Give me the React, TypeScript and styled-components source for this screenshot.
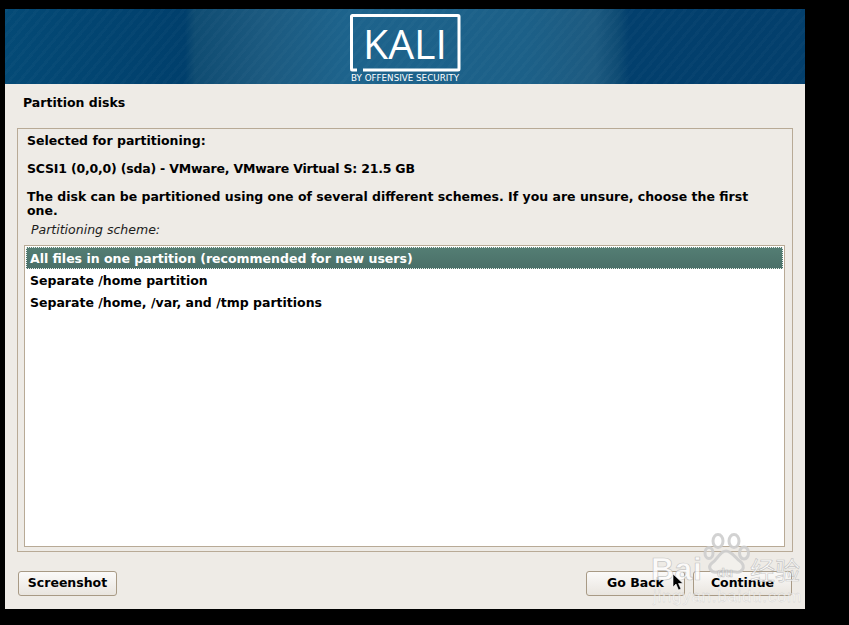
import styled, { createGlobalStyle } from 'styled-components';

const GlobalStyle = createGlobalStyle`
  html, body {
    margin: 0;
    height: 100%;
    background: #000;
  }
  body {
    font-family: "DejaVu Sans", "Liberation Sans", sans-serif;
    font-size: 12.5px;
    color: #000;
  }
`;

const Screen = styled.div`
  position: relative;
  width: 849px;
  height: 625px;
  padding: 9px 0 0 5px;
  box-sizing: border-box;
  background: #000;
  overflow: hidden;
`;

const Installer = styled.div`
  width: 800px;
  height: 600px;
  display: flex;
  flex-direction: column;
  background: #eeebe6;
`;

const Banner = styled.header`
  height: 75px;
  flex: none;
  display: flex;
  justify-content: center;
  background-image: repeating-linear-gradient(
      130deg,
      rgba(255, 255, 255, 0.018) 0 3px,
      rgba(255, 255, 255, 0) 3px 8px
    ),
    linear-gradient(
      90deg,
      #044a76 0,
      #003f6c 180px,
      #0f4c72 190px,
      #1c5a80 260px,
      #1d638c 340px,
      #1c6088 520px,
      #1d5a80 590px,
      #0f4c74 612px,
      #023f6d 624px,
      #033f6c 800px
    );
`;

const Title = styled.h1`
  height: 44px;
  flex: none;
  margin: 0;
  padding: 0 0 8px 18px;
  box-sizing: border-box;
  display: flex;
  align-items: center;
  font-size: 12.5px;
  font-weight: bold;
`;

const Panel = styled.main`
  flex: 1;
  min-height: 0;
  margin: 0 12px;
  padding: 5px 7px 4px 6px;
  display: flex;
  flex-direction: column;
  border: 1px solid #b8aa96;
`;

const Info = styled.p<{ $gap: number; $tracking?: number }>`
  margin: 0 0 ${(props) => props.$gap}px 3px;
  font-weight: bold;
  line-height: 14px;
  letter-spacing: ${(props) => props.$tracking ?? 0}px;
`;

const SchemeLabel = styled.div`
  margin: 5px 0 8px 7px;
  font-style: italic;
  line-height: 14px;
  color: #1c1c1c;
`;

const List = styled.ul`
  flex: 1;
  margin: 0;
  padding: 1px;
  list-style: none;
  background: #fff;
  border: 1px solid #b8aa96;
`;

const Row = styled.li<{ $selected?: boolean }>`
  height: 22px;
  padding-left: 4px;
  box-sizing: border-box;
  display: flex;
  align-items: center;
  font-weight: bold;
  color: ${(props) => (props.$selected ? '#fff' : '#000')};
  background: ${(props) =>
    props.$selected ? 'linear-gradient(#547e74, #4a6f68)' : 'transparent'};
  outline: ${(props) => (props.$selected ? '1px dotted #e8efe9' : 'none')};
  outline-offset: -1px;
`;

const Footer = styled.footer`
  height: 57px;
  flex: none;
  padding: 19px 13px 0 13px;
  box-sizing: border-box;
  display: flex;
  align-items: flex-start;
  gap: 8px;
`;

const Button = styled.button<{ $pushLeft?: boolean }>`
  width: 99px;
  height: 25px;
  margin-left: ${(props) => (props.$pushLeft ? 'auto' : '0')};
  padding: 0 0 2px;
  font: bold 12.5px "DejaVu Sans", sans-serif;
  color: #000;
  background: linear-gradient(#fbfaf9, #e9e5df);
  border: 1px solid #a89a85;
  border-radius: 3px;
`;

const Cursor = styled.svg`
  position: absolute;
  left: 672px;
  top: 574px;
`;

// baidu stamp sits over the whole screenshot, so it covers buttons as well
const Watermark = styled.div`
  position: absolute;
  left: 650px;
  top: 533px;
  width: 160px;
  height: 74px;
  color: rgba(255, 255, 255, 0.78);
  -webkit-text-stroke: 0.7px rgba(165, 165, 165, 0.6);
  pointer-events: none;
`;

const WatermarkBrand = styled.span`
  position: absolute;
  left: 1px;
  top: 20px;
  font: bold 32px/32px "Liberation Sans", sans-serif;
  letter-spacing: 0.5px;
`;

const WatermarkDu = styled.span`
  position: absolute;
  left: 67px;
  top: 33px;
  font: bold 13px/14px "Liberation Sans", sans-serif;
  color: rgba(255, 255, 255, 0.4);
`;

const WatermarkCn = styled.span`
  position: absolute;
  left: 100px;
  top: 23px;
  font: 25px/26px "Noto Sans CJK SC", sans-serif;
`;

const WatermarkUrl = styled.span`
  position: absolute;
  left: 3px;
  top: 55px;
  font: 17px/18px "Liberation Sans", sans-serif;
  letter-spacing: 0.700px;
  white-space: nowrap;
  color: rgba(255, 255, 255, 0.55);
  -webkit-text-stroke: 0.3px rgba(165, 165, 165, 0.5);
`;

const PawPrint = styled.svg`
  position: absolute;
  left: 53px;
  top: 0;
`;

function KaliLogo() {
  return (
    <svg width="120" height="75" viewBox="0 0 120 75">
      <path
        d="M12 61 H7 Q6.5 61 6.5 60 V7.5 Q6.5 6.500 7.500 6.500 H113 Q114 6.500 114 7.500 V60 Q114 61 113 61 H18"
        fill="none"
        stroke="#fff"
        strokeWidth="3"
      />
      <text
        x="60"
        y="50"
        textAnchor="middle"
        fill="#fff"
        fontFamily="'Open Sans', sans-serif"
        fontSize="41"
      >
        KALI
      </text>
      <text
        x="60"
        y="71.500"
        textAnchor="middle"
        fill="#fff"
        fontFamily="'DejaVu Sans', sans-serif"
        fontSize="8"
        textLength="108"
        lengthAdjust="spacingAndGlyphs"
      >
        BY OFFENSIVE SECURITY
      </text>
    </svg>
  );
}

function App() {
  return (
    <>
      <GlobalStyle />
      <Screen>
        <Installer>
          <Banner>
            <KaliLogo />
          </Banner>
          <Title>Partition disks</Title>
          <Panel>
            <Info $gap={14}>Selected for partitioning:</Info>
            <Info $gap={14} $tracking={-0.2}>
              SCSI1 (0,0,0) (sda) - VMware, VMware Virtual S: 21.5 GB
            </Info>
            <Info $gap={0}>
              The disk can be partitioned using one of several different schemes. If you are
              unsure, choose the first
              <br />
              one.
            </Info>
            <SchemeLabel>Partitioning scheme:</SchemeLabel>
            <List>
              <Row $selected>All files in one partition (recommended for new users)</Row>
              <Row>Separate /home partition</Row>
              <Row>Separate /home, /var, and /tmp partitions</Row>
            </List>
          </Panel>
          <Footer>
            <Button>Screenshot</Button>
            <Button $pushLeft>Go Back</Button>
            <Button>Continue</Button>
          </Footer>
        </Installer>
        <Watermark>
          <PawPrint
            width="48"
            height="42"
            viewBox="0 0 48 42"
            fill="rgba(255,255,255,0.25)"
            stroke="rgba(205,205,205,0.9)"
            strokeWidth="3"
          >
            <ellipse cx="15" cy="8" rx="5" ry="6.500" />
            <ellipse cx="31" cy="8" rx="5" ry="6.500" />
            <ellipse cx="6" cy="20" rx="4" ry="5.500" />
            <ellipse cx="41" cy="20" rx="4.500" ry="6" />
            <path d="M23 18 C17 18 15 26 9 30 C4 34 8 40 14 39 C20 38 27 38 33 39 C39 40 43 34 38 29 C33 26 29 18 23 18 Z" />
          </PawPrint>
          <WatermarkBrand>Bai</WatermarkBrand>
          <WatermarkDu>du</WatermarkDu>
          <WatermarkCn>经验</WatermarkCn>
          <WatermarkUrl>jingyan.baidu.com</WatermarkUrl>
        </Watermark>
        <Cursor width="12" height="18" viewBox="0 0 12 18">
          <path
            d="M1 0 L1 13 L4 10 L6.500 16 L9 15 L6.500 9.500 L11 9.500 Z"
            fill="#000"
            stroke="#fff"
            strokeWidth="0.6"
          />
        </Cursor>
      </Screen>
    </>
  );
}

export default App;
